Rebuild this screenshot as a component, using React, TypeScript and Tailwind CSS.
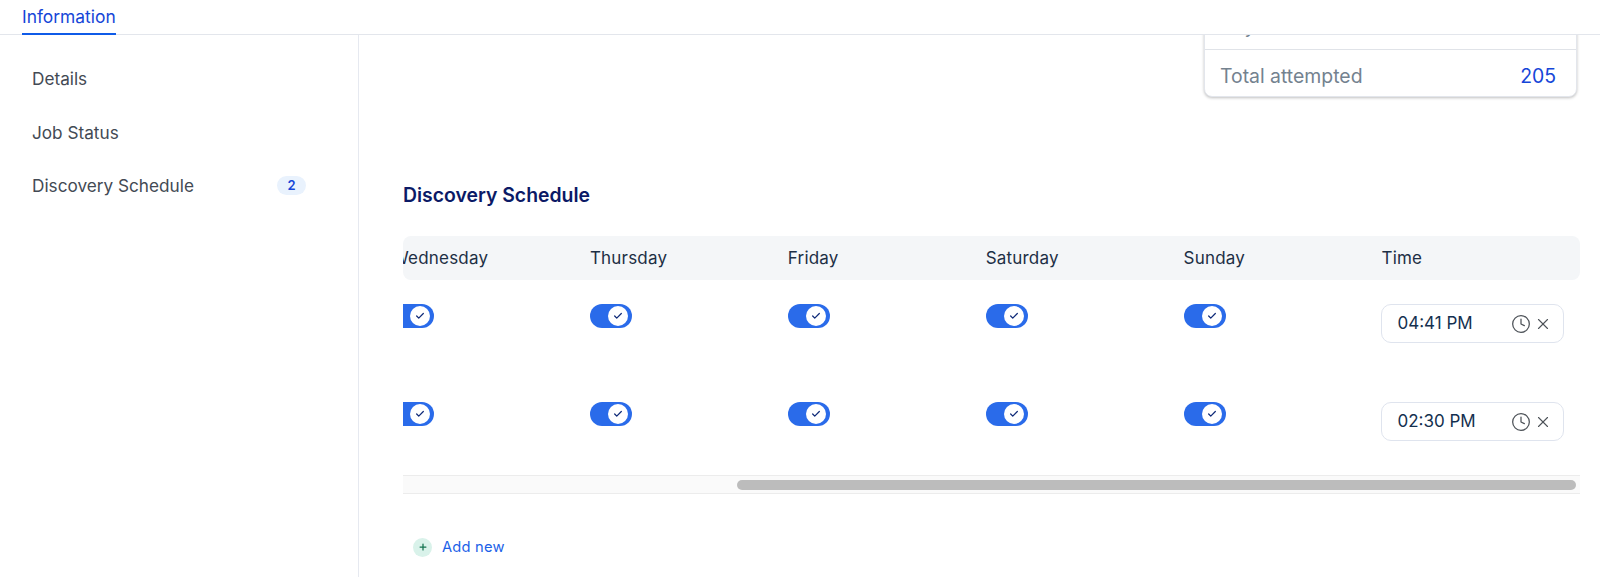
import React from 'react';
import { Clock, X, Check, Plus } from 'lucide-react';

const days = ['Wednesday', 'Thursday', 'Friday', 'Saturday', 'Sunday'];

const schedules = [
  { id: 1, time: '04:41 PM' },
  { id: 2, time: '02:30 PM' }
];

const Toggle: React.FC = () => (
  <div className="w-[42px] h-[24px] rounded-full bg-[#2a6bea] flex items-center justify-end pr-[4px]">
    <div className="w-[20px] h-[20px] rounded-full bg-white flex items-center justify-center">
      <Check size={10} strokeWidth={3} className="text-[#0f2a78]" />
    </div>
  </div>
);

const App: React.FC = () => {
  return (
    <div className="w-[1600px] h-[577px] bg-white overflow-hidden flex flex-col text-[#1d2b3a]" style={{ fontFamily: 'Inter, sans-serif' }}>
      {/* Tabs */}
      <div className="h-[35px] shrink-0 border-b border-[#e3e6ec] pl-[22px]">
        <div className="inline-block h-[35px] border-b-2 border-[#0f5be8] text-[17.4px] leading-[34px] text-[#1546d8]">
          Information
        </div>
      </div>

      <div className="flex flex-1 min-h-0">
        {/* Side nav */}
        <div className="w-[359px] shrink-0 border-r border-[#e6e9f0] pl-[32px] pr-[52px] pt-[33px] text-[17.2px] text-[#434a54] flex flex-col gap-[32.6px]">
          <div className="leading-[21px]">Details</div>
          <div className="leading-[21px]">Job Status</div>
          <div className="flex items-center justify-between leading-[21px]">
            <span>Discovery Schedule</span>
            <span className="w-[29px] h-[19px] rounded-full bg-[#e9f2fd] text-[#1546d8] text-[13px] font-semibold flex items-center justify-center">2</span>
          </div>
        </div>

        {/* Main */}
        <div className="flex-1 min-w-0 pl-[44px] pr-[20px] overflow-hidden">
          {/* Stats card, scrolled partly out of view */}
          <div className="flex justify-end -mt-[27px] mr-[3px]">
            <div className="w-[373px] border border-[#e3e6ec] rounded-[8px] shadow-[0_1px_3px_rgba(0,0,0,0.25)] bg-white text-[19.4px]">
              <div className="h-[41px] flex items-center pl-[15px] pb-[4px] border-b border-[#e0e3e8] text-[#74828f]">
                <span>Day</span>
              </div>
              <div className="h-[46px] flex items-center justify-between pl-[15px] pr-[20px] pt-[8px]">
                <span className="text-[#74828f]">Total attempted</span>
                <span className="text-[#1546d8]">205</span>
              </div>
            </div>
          </div>

          <h2 className="mt-[85px] text-[19.4px] leading-[26px] font-semibold text-[#0b1a66]">Discovery Schedule</h2>

          {/* Schedule table */}
          <div className="mt-[28px] overflow-hidden">
            <div className="h-[44px] pt-[1px] bg-[#f4f6f8] rounded-[8px] flex items-center text-[17px] tracking-[0.2px] text-[#1d2f45] overflow-hidden">
              <div className="flex -ml-[11px]">
                {days.map(d => (
                  <div key={d} className="w-[197.9px] shrink-0">{d}</div>
                ))}
                <div>Time</div>
              </div>
            </div>

            {schedules.map(s => (
              <div key={s.id} className="flex -ml-[11px] h-[98px] pt-[24px]">
                {days.map(d => (
                  <div key={d} className="w-[197.9px] shrink-0">
                    <Toggle />
                  </div>
                ))}
                <div className="w-[182.5px] h-[39px] border-[1.5px] border-[#dfe4ee] rounded-[10px] flex items-center pl-[15px] pr-[11px] text-[17px] text-[#14304f]">
                  <span className="flex-1">{s.time}</span>
                  <Clock size={20} strokeWidth={1.5} className="text-[#4d5258]" />
                  <X size={18} strokeWidth={1.5} className="ml-[3px] text-[#4d5258]" />
                </div>
              </div>
            ))}

            {/* Scrollbar */}
            <div className="h-[19px] -mt-[1px] bg-[#fafafa] border-y border-[#ececec] flex items-center pl-[334px] pr-[4px]">
              <div className="w-full h-[10px] rounded-full bg-[#bcbcbc]"></div>
            </div>
          </div>

          <button className="mt-[42px] ml-[10px] flex items-center gap-[10px] text-[14.7px] tracking-[0.2px] text-[#1c62e8]">
            <span className="w-[19px] h-[19px] rounded-full bg-[#d9f2ea] flex items-center justify-center">
              <Plus size={10} strokeWidth={3} className="text-[#12734f]" />
            </span>
            Add new
          </button>
        </div>
      </div>
    </div>
  );
};

export default App;
